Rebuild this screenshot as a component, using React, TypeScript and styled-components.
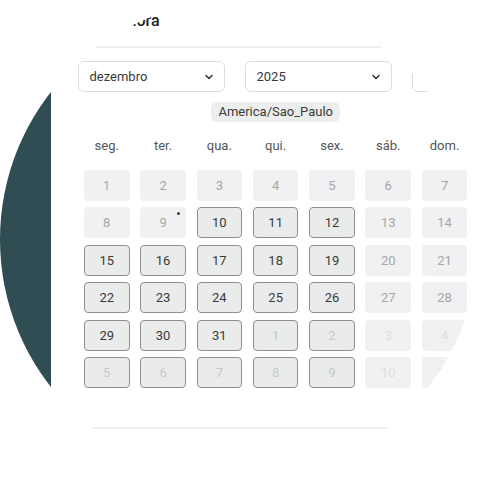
import React from 'react';
import styled, { createGlobalStyle } from 'styled-components';

const TEAL = '#2f4d52';

const GlobalStyle = createGlobalStyle`
  html, body {
    margin: 0;
    padding: 0;
    background: #ffffff;
  }
  body {
    font-family: Roboto, 'Liberation Sans', sans-serif;
  }
`;

const Lens = styled.div`
  width: 479px;
  height: 479px;
  border-radius: 50%;
  overflow: hidden;
  display: flex;
  background: #ffffff;
`;

const Sidebar = styled.div`
  width: 50.5px;
  flex-shrink: 0;
  background: ${TEAL};
`;

const Panel = styled.div`
  flex: 1;
  min-width: 0;
  background: #ffffff;
  padding: 10px 0 0 27.5px;
  display: flex;
  flex-direction: column;
`;

const Title = styled.h2`
  margin: 0;
  font-size: 16px;
  line-height: 22px;
  font-weight: 500;
  color: #1e1e1e;
  white-space: nowrap;
`;

const Divider = styled.div<{ $gap: number }>`
  height: 2px;
  background: #f0f0f0;
  margin-top: ${(p) => p.$gap}px;
  flex-shrink: 0;
`;

const SelectRow = styled.div`
  display: flex;
  gap: 20.5px;
  margin-top: 13px;
`;

const Select = styled.div`
  width: 146.5px;
  height: 31px;
  flex-shrink: 0;
  box-sizing: border-box;
  border: 1px solid #dcdcdc;
  border-radius: 6px;
  display: flex;
  align-items: center;
  justify-content: space-between;
  padding: 0 10px 0 10.5px;
  font-size: 13px;
  color: #3a3a3a;
`;

const Calendar = styled.div`
  width: 383.5px;
  margin-left: 6px;
  display: flex;
  flex-direction: column;
`;

const ZoneRow = styled.div`
  display: flex;
  justify-content: center;
  margin-top: 10px;
`;

const ZonePill = styled.span`
  height: 20px;
  line-height: 20px;
  padding: 0 7px;
  border-radius: 6px;
  background: #eceeed;
  font-size: 13px;
  color: #3a3a3a;
`;

const WeekHeader = styled.div`
  display: grid;
  grid-template-columns: repeat(7, 45.5px);
  column-gap: 10.8px;
  margin-top: 14px;
  height: 20px;
`;

const WeekDay = styled.span`
  text-align: center;
  line-height: 20px;
  font-size: 13px;
  color: #555555;
`;

const DayGrid = styled.div`
  display: grid;
  grid-template-columns: repeat(7, 45.5px);
  grid-auto-rows: 30.7px;
  column-gap: 10.8px;
  row-gap: 6.8px;
  margin-top: 14px;
`;

type Kind = 'off' | 'on' | 'nextOn' | 'nextOff';

const textColor: Record<Kind, string> = {
  off: '#a6a6a6',
  on: '#3a3a3a',
  nextOn: '#c8c8c8',
  nextOff: '#dedede',
};

const Day = styled.div<{ $kind: Kind }>`
  position: relative;
  box-sizing: border-box;
  border-radius: 4px;
  display: flex;
  align-items: center;
  justify-content: center;
  font-size: 13px;
  color: ${(p) => textColor[p.$kind]};
  background: ${(p) => (p.$kind === 'on' || p.$kind === 'nextOn' ? '#eaeceb' : '#f1f1f3')};
  border: 1px solid
    ${(p) => (p.$kind === 'on' || p.$kind === 'nextOn' ? '#8f8f8f' : 'transparent')};
`;

const TodayDot = styled.span`
  position: absolute;
  top: 3.5px;
  right: 4.5px;
  width: 3px;
  height: 3px;
  border-radius: 50%;
  background: ${TEAL};
`;

const Chevron = () => (
  <svg width="10" height="10" viewBox="0 0 10 10">
    <polyline points="2,3.5 5,6.5 8,3.5" fill="none" stroke="#333" strokeWidth="1.5" strokeLinecap="round" strokeLinejoin="round" />
  </svg>
);

const WEEKDAYS = ['seg.', 'ter.', 'qua.', 'qui.', 'sex.', 'sáb.', 'dom.'];

const buildDays = () => {
  const days: { label: number; kind: Kind; today?: boolean }[] = [];
  for (let d = 1; d <= 31; d++) {
    const weekday = (d - 1) % 7; // dec 1 2025 is a monday
    const open = d >= 10 && weekday < 5;
    days.push({ label: d, kind: open ? 'on' : 'off', today: d === 9 });
  }
  for (let d = 1; d <= 11; d++) {
    const weekday = (31 + d - 1) % 7;
    days.push({ label: d, kind: weekday < 5 ? 'nextOn' : 'nextOff' });
  }
  return days;
};

const App = () => {
  const days = buildDays();
  return (
    <>
      <GlobalStyle />
      <Lens>
        <Sidebar />
        <Panel>
          <Title>Data e hora</Title>
          <Divider $gap={14} />
          <SelectRow>
            <Select>
              dezembro
              <Chevron />
            </Select>
            <Select>
              2025
              <Chevron />
            </Select>
            <Select />
          </SelectRow>
          <Calendar>
            <ZoneRow>
              <ZonePill>America/Sao_Paulo</ZonePill>
            </ZoneRow>
            <WeekHeader>
              {WEEKDAYS.map((w) => (
                <WeekDay key={w}>{w}</WeekDay>
              ))}
            </WeekHeader>
            <DayGrid>
              {days.map((d, i) => (
                <Day key={i} $kind={d.kind}>
                  {d.label}
                  {d.today && <TodayDot />}
                </Day>
              ))}
            </DayGrid>
          </Calendar>
          <Divider $gap={38.5} />
        </Panel>
      </Lens>
    </>
  );
};

export default App;
